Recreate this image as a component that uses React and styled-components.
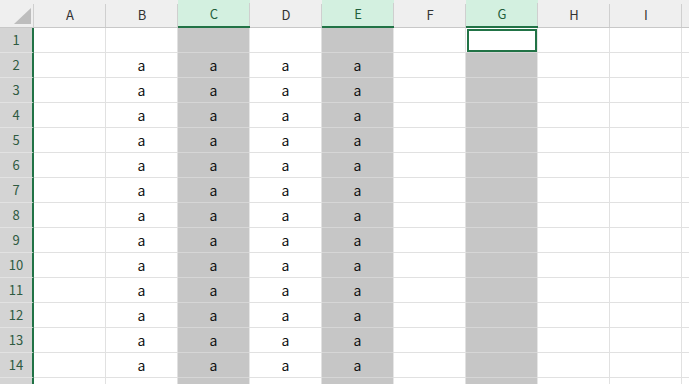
import styled, { createGlobalStyle } from "styled-components";

const GlobalStyle = createGlobalStyle`
  body {
    margin: 0;
    background: #ffffff;
    overflow: hidden;
  }
`;

const columns = ["A", "B", "C", "D", "E", "F", "G", "H", "I", ""];
const selectedCols = ["C", "E", "G"];
const filledCols = ["B", "C", "D", "E"];
// row 15 only peeks in at the bottom edge, its label sits below the fold
const rows = Array.from({ length: 15 }, (_, i) => i + 1);
const lastVisible = 14;

const Sheet = styled.div`
  display: grid;
  grid-template-columns: 34px repeat(10, 72px);
  grid-template-rows: 28px;
  grid-auto-rows: 25px;
  width: 689px;
  height: 384px;
  overflow: hidden;
  font-family: "Noto Sans CJK JP", "Noto Sans", sans-serif;
`;

const Corner = styled.div`
  display: flex;
  align-items: flex-end;
  justify-content: flex-end;
  padding: 0 3px 3px 0;
  background: linear-gradient(#cfcfcf, #cfcfcf) no-repeat right bottom / 1px 23px,
    #efefef;
  border-bottom: 1px solid #c8c8c8;
  box-sizing: border-box;
`;

const ColHead = styled.div`
  display: flex;
  align-items: center;
  justify-content: center;
  box-sizing: border-box;
  padding-top: 1px;
  font-size: 13px;
  color: ${(p) => (p.$selected ? "#1f5f3c" : "#333333")};
  background: linear-gradient(#cfcfcf, #cfcfcf) no-repeat right bottom / 1px 23px,
    ${(p) => (p.$selected ? "#d3f0e0" : "#efefef")};
  border-bottom: ${(p) =>
    p.$selected ? "2px solid #217346" : "1px solid #c8c8c8"};
`;

const RowHead = styled.div`
  display: flex;
  align-items: center;
  justify-content: center;
  box-sizing: border-box;
  padding-bottom: 1px;
  font-size: 13px;
  color: #2e5a41;
  background: #d4d4d4;
  border-bottom: 1px solid #e2e2e2;
  border-right: 2px solid #217346;
`;

const Cell = styled.div`
  display: flex;
  align-items: center;
  justify-content: center;
  box-sizing: border-box;
  font-size: 14px;
  color: #111111;
  background: ${(p) =>
    p.$active ? "#ffffff" : p.$selected ? "#c6c6c6" : "#ffffff"};
  border-right: 1px solid ${(p) => (p.$selected ? "#e6e6e6" : "#e1e1e1")};
  border-bottom: 1px solid ${(p) => (p.$selected ? "#d6d6d6" : "#e1e1e1")};
  outline: ${(p) => (p.$active ? "2px solid #217346" : "none")};
  outline-offset: -3px;
`;

const CornerMark = () => (
  <svg width="17" height="16" viewBox="0 0 17 16">
    <polygon points="17,0 17,16 0,16" fill="#bdbdbd" />
  </svg>
);

export default function App() {
  return (
    <>
      <GlobalStyle />
      <Sheet>
        <Corner>
          <CornerMark />
        </Corner>
        {columns.map((c, i) => (
          <ColHead key={`h${i}`} $selected={selectedCols.includes(c)}>
            {c}
          </ColHead>
        ))}
        {rows.map((r) => {
          const shown = r <= lastVisible;
          return [
            <RowHead key={`r${r}`}>{shown ? r : ""}</RowHead>,
            ...columns.map((c, i) => (
              <Cell
                key={`${r}-${i}`}
                $selected={selectedCols.includes(c)}
                $active={c === "G" && r === 1}
              >
                {shown && r > 1 && filledCols.includes(c) ? "a" : ""}
              </Cell>
            )),
          ];
        })}
      </Sheet>
    </>
  );
}
